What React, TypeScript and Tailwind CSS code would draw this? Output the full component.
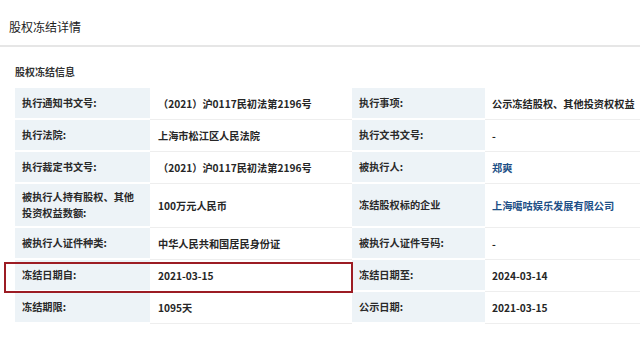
import React from "react";

type Cell = { text: string; link?: boolean };
type Row = { l1: string; v1: Cell; l2: string; v2: Cell; tall?: boolean };

const rows: Row[] = [
  { l1: "执行通知书文号:", v1: { text: "（2021）沪0117民初法第2196号" }, l2: "执行事项:", v2: { text: "公示冻结股权、其他投资权权益" } },
  { l1: "执行法院:", v1: { text: "上海市松江区人民法院" }, l2: "执行文书文号:", v2: { text: "-" } },
  { l1: "执行裁定书文号:", v1: { text: "（2021）沪0117民初法第2196号" }, l2: "被执行人:", v2: { text: "郑爽", link: true } },
  {
    l1: "被执行人持有股权、其他\n投资权益数额:",
    v1: { text: "100万元人民币" },
    l2: "冻结股权标的企业",
    v2: { text: "上海噶咕娱乐发展有限公司", link: true },
    tall: true,
  },
  { l1: "被执行人证件种类:", v1: { text: "中华人民共和国居民身份证" }, l2: "被执行人证件号码:", v2: { text: "-" } },
  { l1: "冻结日期自:", v1: { text: "2021-03-15" }, l2: "冻结日期至:", v2: { text: "2024-03-14" } },
  { l1: "冻结期限:", v1: { text: "1095天" }, l2: "公示日期:", v2: { text: "2021-03-15" } },
];

function Label({ text, tall }: { text: string; tall?: boolean }) {
  return (
    <div
      className={`flex items-center bg-[#edf3f7] border-b-2 border-white pl-[7px] font-bold text-[#2a2a2a] whitespace-pre-line leading-[16px] ${
        tall ? "h-[44px]" : "h-[32px]"
      }`}
    >
      {text}
    </div>
  );
}

function Value({ cell, tall, first }: { cell: Cell; tall?: boolean; first?: boolean }) {
  return (
    <div
      className={`flex items-center border-b border-[#eeeeee] font-semibold ${first ? "pl-[8px]" : "pl-[7px]"} ${
        cell.link ? "text-[#1d4f86]" : "text-[#262626]"
      } ${tall ? "h-[44px]" : "h-[32px]"}`}
    >
      {cell.text}
    </div>
  );
}

export default function App() {
  return (
    <div
      className="relative w-[640px] h-[350px] overflow-hidden bg-white"
      style={{ fontFamily: '"Noto Sans CJK SC", "Noto Sans", sans-serif' }}
    >
      <div className="h-[45px] pl-[9px] pt-[18px] text-[12px] leading-[18px] text-[#222]">股权冻结详情</div>
      <div className="h-[2px] bg-[#e6e6e6]" />

      <div className="pl-[15px] pt-[18px] text-[10px] leading-[14px] font-semibold text-[#333]">股权冻结信息</div>

      <div className="relative mt-[9px] ml-[15px] grid grid-cols-[135px_202px_133px_1fr] text-[10.2px]">
        {rows.map((r, i) => (
          <React.Fragment key={i}>
            <Label text={r.l1} tall={r.tall} />
            <Value cell={r.v1} tall={r.tall} first />
            <Label text={r.l2} tall={r.tall} />
            <Value cell={r.v2} tall={r.tall} />
          </React.Fragment>
        ))}

        {/* highlight around the freeze start date */}
        <div className="absolute left-[-11px] top-[174px] w-[349px] h-[31px] border-2 border-[#9c1c24] pointer-events-none" />
      </div>
    </div>
  );
}
